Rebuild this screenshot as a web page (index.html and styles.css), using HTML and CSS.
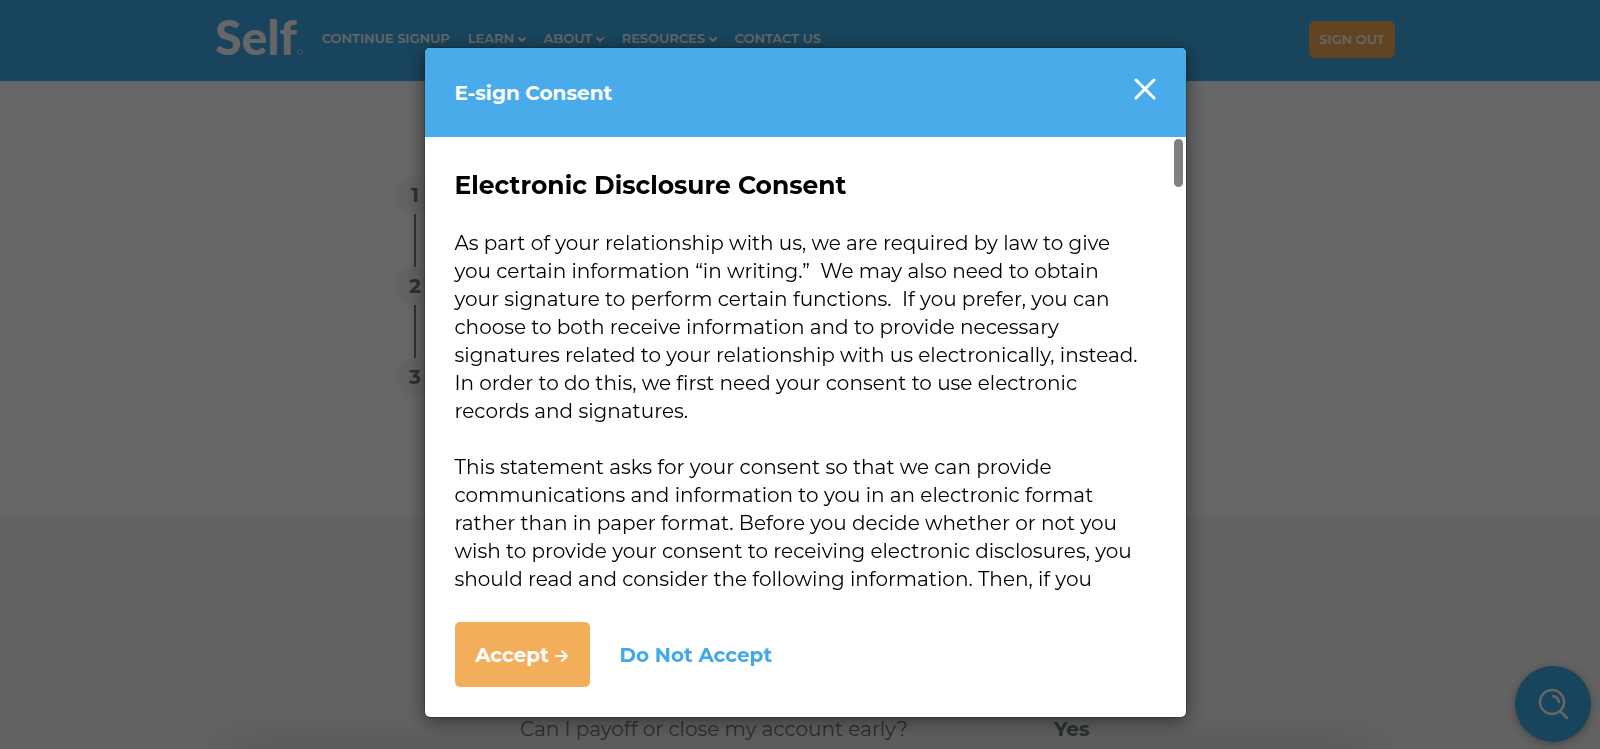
FILE: index.html
```html
<!DOCTYPE html>
<html lang="en">

<head>
  <meta charset="UTF-8">
  <meta name="viewport" content="width=device-width, initial-scale=1.0">
  <title>E-sign Consent</title>
  <link rel="stylesheet" href="styles.css">
</head>
<body>
  <div class="page">
    <header class="site-header">
      <div class="header-inner">
        <a href="#" class="logo">Self<span class="logo-dot"></span></a>
        <nav class="main-nav">
          <a href="#">CONTINUE SIGNUP</a>
          <a href="#">LEARN <svg class="chevron" viewBox="0 0 8 7"><path d="M1 2l3 3 3-3"/></svg></a>
          <a href="#">ABOUT <svg class="chevron" viewBox="0 0 8 7"><path d="M1 2l3 3 3-3"/></svg></a>
          <a href="#">RESOURCES <svg class="chevron" viewBox="0 0 8 7"><path d="M1 2l3 3 3-3"/></svg></a>
          <a href="#">CONTACT US</a>
        </nav>
        <button type="button" class="sign-out">SIGN OUT</button>
      </div>
    </header>

    <section class="steps-section">
      <ol class="steps">
        <li>1</li>
        <li>2</li>
        <li>3</li>
      </ol>
    </section>

    <section class="faq-section">
      <dl class="faq-row">
        <dt>Can I payoff or close my account early?</dt>
        <dd>Yes</dd>
      </dl>
      <div class="faq-card"></div>
    </section>
  </div>

  <button type="button" class="search-button" aria-label="Search">
    <svg viewBox="0 0 32 32">
      <circle cx="15" cy="14" r="12"/>
      <path d="M16 8q5 1 6 6"/>
      <path d="M23 23l7 7"/>
    </svg>
  </button>

  <!-- E-sign modal -->
  <div class="overlay">
    <div class="modal" role="dialog" aria-modal="true" aria-labelledby="modal-title">
      <div class="modal-header">
        <h2 id="modal-title">E-sign Consent</h2>
        <button type="button" class="close-button" aria-label="Close">
          <svg viewBox="0 0 22 22"><path d="M2 2l18 18M20 2L2 20"/></svg>
        </button>
      </div>
      <div class="modal-body">
        <div class="modal-scroll">
          <h3>Electronic Disclosure Consent</h3>
          <p>As part of your relationship with us, we are required by law to give<br>
            you certain information “in writing.”&nbsp; We may also need to obtain<br>
            your signature to perform certain functions.&nbsp; If you prefer, you can<br>
            choose to both receive information and to provide necessary<br>
            signatures related to your relationship with us electronically, instead.<br>
            In order to do this, we first need your consent to use electronic<br>
            records and signatures.</p>
          <p>This statement asks for your consent so that we can provide<br>
            communications and information to you in an electronic format<br>
            rather than in paper format. Before you decide whether or not you<br>
            wish to provide your consent to receiving electronic disclosures, you<br>
            should read and consider the following information. Then, if you</p>
        </div>
        <span class="scroll-thumb"></span>
      </div>
      <div class="modal-footer">
        <button type="button" class="accept-button">Accept
          <svg viewBox="0 0 14 14"><path d="M1 8h11M7 3l5 5-5 5"/></svg>
        </button>
        <button type="button" class="decline-button">Do Not Accept</button>
      </div>
    </div>
  </div>
</body>
</html>
```
FILE: styles.css
```css
* {
  box-sizing: border-box;
}

body {
  margin: 0;
  font-family: Montserrat, Inter, sans-serif;
  color: #6a7c80;
  background-color: #fff;
}

button {
  font-family: inherit;
  border: none;
  cursor: pointer;
}

svg {
  fill: none;
  stroke: currentColor;
  stroke-linecap: round;
  stroke-linejoin: round;
}

.page {
  display: flex;
  flex-direction: column;
  height: 100vh;
  overflow: hidden;
}

/* Header */
.site-header {
  flex-shrink: 0;
  padding-left: 10px;
  background-color: #3eaae8;
}

.header-inner {
  display: flex;
  align-items: center;
  max-width: 1180px;
  height: 81px;
  margin: 0 auto;
  padding-bottom: 3px;
}

.logo {
  display: flex;
  align-items: flex-end;
  padding-bottom: 4px;
  color: #fff;
  font-family: Lato, sans-serif;
  font-size: 48px;
  font-weight: 900;
  line-height: 48px;
  text-decoration: none;
}

.logo-dot {
  width: 6px;
  height: 6px;
  margin-bottom: 6px;
  border: 1px dotted #fff;
  border-radius: 50%;
}

.main-nav {
  display: flex;
  flex: 1;
  gap: 18px;
  margin-left: 19px;
  padding-bottom: 2px;
}

.main-nav a {
  color: #fff;
  font-size: 13px;
  font-weight: 600;
  text-decoration: none;
  white-space: nowrap;
}

.chevron {
  width: 8px;
  height: 7px;
  stroke-width: 2;
}

.sign-out {
  width: 86px;
  height: 37px;
  padding: 0;
  border-radius: 6px;
  background-color: #f5aa58;
  color: #fff;
  font-size: 13px;
  font-weight: 600;
}

/* Steps */
.steps-section {
  flex-shrink: 0;
  height: 435px;
  padding: 95px 0 0 10px;
}

.steps {
  display: flex;
  flex-direction: column;
  gap: 53px;
  max-width: 818px;
  margin: 0 auto;
  padding: 0;
  list-style: none;
}

.steps li {
  position: relative;
  width: 38px;
  height: 38px;
  border-radius: 50%;
  background-color: #f5f5f5;
  font-size: 20px;
  font-weight: 700;
  line-height: 38px;
  text-align: center;
}

.steps li + li::before {
  content: "";
  position: absolute;
  bottom: 100%;
  left: 18px;
  width: 2px;
  height: 53px;
  background-color: #6f8581;
}

/* FAQ */
.faq-section {
  flex: 1;
  display: flex;
  flex-direction: column;
  justify-content: flex-end;
  background-color: #f5f5f5;
}

.faq-row {
  display: grid;
  grid-template-columns: 534px 1fr;
  width: 100%;
  max-width: 1080px;
  margin: 0 auto;
  padding-left: 260px;
  font-size: 20px;
  line-height: 40px;
}

.faq-row dd {
  margin: 0;
  font-weight: 700;
}

.faq-card {
  width: 100%;
  max-width: 1120px;
  margin: 0 auto;
  box-shadow: 0 10px 40px 10px rgba(0, 0, 0, 0.2);
}

.search-button {
  position: fixed;
  right: 9px;
  bottom: 7px;
  display: flex;
  align-items: center;
  justify-content: center;
  width: 76px;
  height: 76px;
  padding: 0;
  border-radius: 50%;
  background-color: #3eaae8;
  box-shadow: 0 2px 10px rgba(0, 0, 0, 0.3);
  color: #fff;
}

.search-button svg {
  width: 32px;
  height: 32px;
  stroke-width: 2.5;
}

/* Modal */
.overlay {
  position: fixed;
  inset: 0;
  display: flex;
  align-items: center;
  justify-content: center;
  padding: 48px 0 32px 10px;
  background-color: rgba(0, 0, 0, 0.6);
}

.modal {
  display: flex;
  flex-direction: column;
  width: 100%;
  max-width: 761px;
  height: 100%;
  overflow: hidden;
  border-radius: 5px;
  background-color: #fff;
  box-shadow: 0 4px 20px rgba(0, 0, 0, 0.5), 0 0 2px rgba(0, 0, 0, 0.7);
  color: #000;
}

.modal-header {
  display: flex;
  flex-shrink: 0;
  align-items: center;
  justify-content: space-between;
  height: 89px;
  padding: 0 30px;
  background-color: #49abe9;
  color: #fff;
}

.modal-header h2 {
  margin: 0;
  font-size: 20px;
  font-weight: 700;
}

.close-button {
  display: flex;
  padding: 0 0 8px;
  background: none;
  color: #fff;
}

.close-button svg {
  width: 22px;
  height: 22px;
  stroke-width: 3;
}

.modal-body {
  position: relative;
  flex: 1;
  min-height: 0;
}

.modal-scroll {
  height: 100%;
  padding: 32px 30px 0;
  overflow-y: auto;
  scrollbar-width: none;
}

.modal-scroll h3 {
  margin: 0 0 28px;
  font-size: 25px;
  font-weight: 700;
  line-height: 32px;
}

.modal-scroll p {
  margin: 0 0 28px;
  font-size: 20px;
  font-weight: 400;
  line-height: 28px;
  white-space: nowrap;
}

.scroll-thumb {
  position: absolute;
  top: 2px;
  right: 3px;
  width: 9px;
  height: 48px;
  border-radius: 5px;
  background-color: #808080;
}

.modal-footer {
  display: flex;
  flex-shrink: 0;
  gap: 30px;
  padding: 24px 30px 30px;
}

.accept-button,
.decline-button {
  display: flex;
  align-items: center;
  height: 65px;
  padding: 0;
  font-size: 20px;
  font-weight: 700;
}

.accept-button {
  justify-content: center;
  gap: 6px;
  width: 135px;
  border-radius: 5px;
  background-color: #f2ae5a;
  color: #fff;
}

.accept-button svg {
  width: 14px;
  height: 14px;
  stroke-width: 2;
}

.decline-button {
  background: none;
  color: #42a9e8;
}
```
